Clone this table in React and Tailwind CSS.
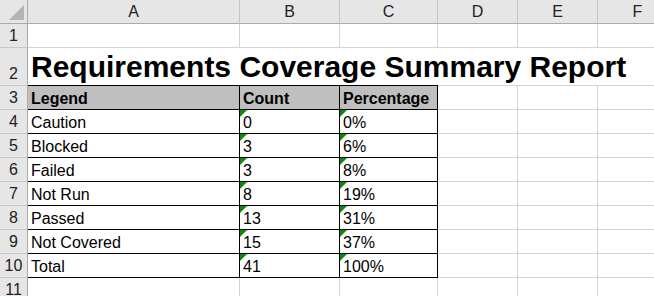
const columns = ['A', 'B', 'C', 'D', 'E', 'F'];

const rows = [
  { legend: 'Caution', count: '0', pct: '0%' },
  { legend: 'Blocked', count: '3', pct: '6%' },
  { legend: 'Failed', count: '3', pct: '8%' },
  { legend: 'Not Run', count: '8', pct: '19%' },
  { legend: 'Passed', count: '13', pct: '31%' },
  { legend: 'Not Covered', count: '15', pct: '37%' },
  { legend: 'Total', count: '41', pct: '100%' },
];

// green "number stored as text" marker
function TextFlag() {
  return (
    <svg className="absolute left-0 top-0" width="7" height="7" viewBox="0 0 7 7">
      <polygon points="0,0 7,0 0,7" fill="#0b8a0b" />
    </svg>
  );
}

function RowHead({ n }) {
  return (
    <div className="flex items-end justify-center pb-[2px] bg-[#e6e6e6] border-r border-b border-r-[#ababab] border-b-[#c6c6c6] text-[16px] leading-[18px] text-[#222]">
      {n}
    </div>
  );
}

function Blank() {
  return <div className="border-r border-b border-[#d4d4d4]" />;
}

function Cell({ children, head = false, flag = false }) {
  return (
    <div
      className={
        head
          ? 'relative flex items-end pl-[3px] pb-[1px] bg-[#bfbfbf] border-r border-b border-black font-bold text-[16px] leading-[18px] whitespace-nowrap'
          : 'relative flex items-end pl-[3px] pb-[1px] bg-white border-r border-b border-black text-[16px] leading-[18px] whitespace-nowrap'
      }
    >
      {flag && <TextFlag />}
      {children}
    </div>
  );
}

export default function App() {
  return (
    <div className="w-[654px] h-[296px] overflow-hidden bg-white text-black font-['Liberation_Sans',Arial,sans-serif]">
      <div className="grid grid-cols-[28px_212px_100px_98px_80px_80px_80px] grid-rows-[24px_24px_38px_repeat(8,24px)_24px]">
        {/* column headers */}
        <div className="relative bg-[#e6e6e6] border-r border-b border-[#ababab]">
          <svg className="absolute right-[3px] bottom-[3px]" width="15" height="15" viewBox="0 0 15 15">
            <polygon points="15,0 15,15 0,15" fill="#b4b4b4" />
          </svg>
        </div>
        {columns.map((c) => (
          <div
            key={c}
            className="flex items-center justify-center bg-[#e6e6e6] border-r border-b border-r-[#c6c6c6] border-b-[#ababab] text-[16px] text-[#222]"
          >
            {c}
          </div>
        ))}

        {/* row 1 */}
        <RowHead n={1} />
        {columns.map((c) => (
          <Blank key={c} />
        ))}

        {/* row 2 - title overflows across columns */}
        <RowHead n={2} />
        <div className="flex items-end pl-[3px] pb-[1px] border-b border-black whitespace-nowrap overflow-visible">
          <span className="text-[30px] leading-[34px] font-bold">Requirements Coverage Summary Report</span>
        </div>
        <div className="border-b border-black" />
        <div className="border-b border-black" />
        <div className="border-b border-[#d4d4d4]" />
        <div className="border-b border-[#d4d4d4]" />
        <div className="border-b border-[#d4d4d4]" />

        {/* row 3 - table header */}
        <RowHead n={3} />
        <Cell head>Legend</Cell>
        <Cell head>Count</Cell>
        <Cell head>Percentage</Cell>
        <Blank />
        <Blank />
        <Blank />

        {rows.map((r, i) => (
          <div key={r.legend} className="contents">
            <RowHead n={i + 4} />
            <Cell>{r.legend}</Cell>
            <Cell flag>{r.count}</Cell>
            <Cell flag>{r.pct}</Cell>
            <Blank />
            <Blank />
            <Blank />
          </div>
        ))}

        {/* row 11 */}
        <RowHead n={11} />
        {columns.map((c) => (
          <Blank key={c} />
        ))}
      </div>
    </div>
  );
}
